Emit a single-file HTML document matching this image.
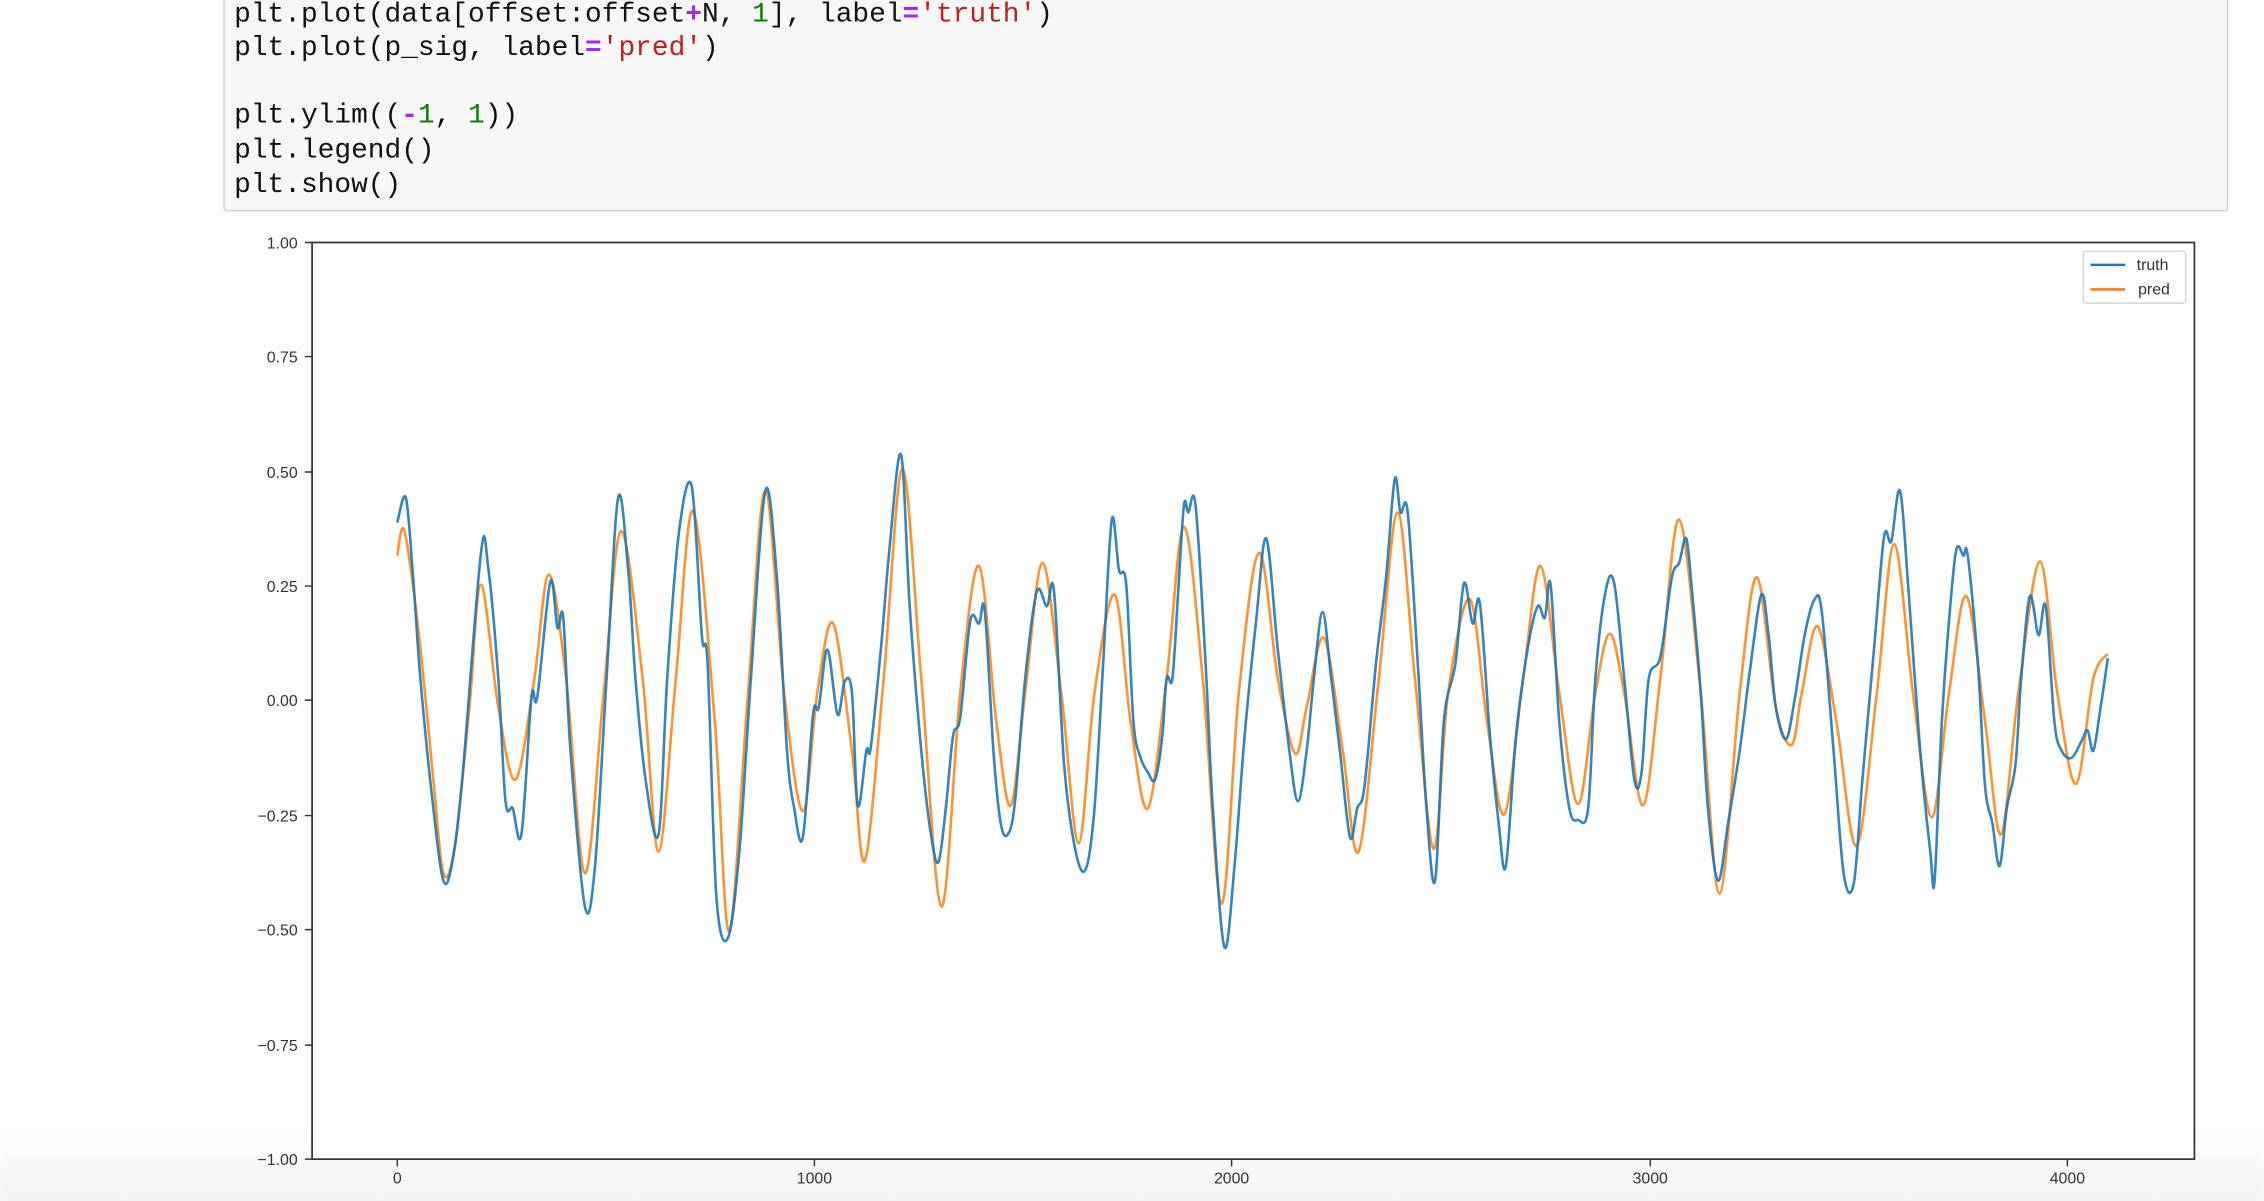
<!DOCTYPE html>
<html><head><meta charset="utf-8"><style>
html,body{margin:0;padding:0;width:2264px;height:1201px;overflow:hidden;background:#fff}
svg{display:block}
</style></head><body>
<svg id="s" width="2264" height="1201" viewBox="0 0 1568 832" xmlns="http://www.w3.org/2000/svg">
<defs><linearGradient id="bg" x1="0" y1="0" x2="0" y2="1"><stop offset="0" stop-color="#fff"/><stop offset="1" stop-color="#f4f4f4"/></linearGradient></defs>
<rect x="0" y="780" width="1568" height="52" fill="url(#bg)"/>
<rect x="155" y="-10" width="1388" height="156" rx="2" fill="#f7f7f7" stroke="#d0d0d0" stroke-width="1"/>
<g font-family="Liberation Mono, monospace" font-size="19.3" fill="#111">
<text x="162" y="15" xml:space="preserve">plt.plot(data[offset:offset<tspan fill="#aa22ff" font-weight="bold">+</tspan>N, <tspan fill="#008000">1</tspan>], label<tspan fill="#aa22ff" font-weight="bold">=</tspan><tspan fill="#ba2121">'truth'</tspan>)</text>
<text x="162" y="38" xml:space="preserve">plt.plot(p_sig, label<tspan fill="#aa22ff" font-weight="bold">=</tspan><tspan fill="#ba2121">'pred'</tspan>)</text>
<text x="162" y="85" xml:space="preserve">plt.ylim((<tspan fill="#aa22ff" font-weight="bold">-</tspan><tspan fill="#008000">1</tspan>, <tspan fill="#008000">1</tspan>))</text>
<text x="162" y="109">plt.legend()</text>
<text x="162" y="133">plt.show()</text>
</g>
<rect x="216" y="168" width="1304" height="635" fill="#fff" stroke="#333" stroke-width="1.2"/>
<g stroke="#333" stroke-width="1">
<path d="M211 168h5M211 247h5M211 327h5M211 406h5M211 485h5M211 565h5M211 644h5M211 724h5M211 803h5M275 803v5M564 803v5M853 803v5M1143 803v5M1432 803v5"/>
</g>
<g font-family="Liberation Sans, sans-serif" font-size="11" fill="#333" text-anchor="end">
<text x="206" y="172">1.00</text><text x="206" y="251">0.75</text><text x="206" y="331">0.50</text><text x="206" y="410">0.25</text><text x="206" y="489">0.00</text><text x="206" y="569">−0.25</text><text x="206" y="648">−0.50</text><text x="206" y="728">−0.75</text><text x="206" y="807">−1.00</text>
</g>
<g font-family="Liberation Sans, sans-serif" font-size="11" fill="#333" text-anchor="middle">
<text x="275" y="820">0</text><text x="564" y="820">1000</text><text x="853" y="820">2000</text><text x="1143" y="820">3000</text><text x="1432" y="820">4000</text>
</g>
<polyline class="c" fill="none" stroke="#ff7f0e" stroke-opacity="0.85" stroke-width="1.8" stroke-linejoin="round" points="275,385 280,368 290,440 300,540 307,605 315,585 325,490 333,405 345,490 357,540 370,470 380,398 392,470 405,605 418,480 430,368 445,470 456,590 468,470 480,354 495,500 505,645 518,480 530,340 543,480 556,562 566,480 577,432 590,520 599,596 612,470 625,325 638,470 652,628 665,480 678,392 690,500 700,558 710,480 722,390 735,480 747,584 758,480 772,412 783,500 795,560 808,470 820,365 833,470 846,626 858,480 872,383 885,470 897,522 905,490 917,442 930,520 941,590 955,470 968,355 980,470 993,588 1003,480 1018,415 1030,500 1042,564 1055,470 1067,392 1080,480 1093,557 1105,480 1115,439 1125,480 1138,558 1150,470 1163,360 1178,480 1191,619 1205,480 1217,400 1230,490 1241,516 1248,480 1259,434 1272,500 1286,586 1300,480 1312,377 1325,480 1338,566 1350,480 1362,413 1375,500 1386,578 1398,480 1413,389 1425,480 1438,543 1450,470 1460,453"/>
<polyline class="c" fill="none" stroke="#1f77b4" stroke-opacity="0.9" stroke-width="1.8" stroke-linejoin="round" points="275,362 281,345 286,400 291,470 300,560 307,610 313,598 320,540 333,383 338,393 345,470 350,555 355,560 361,578 368,483 372,483 381,403 386,435 390,428 395,520 405,628 412,600 420,470 428,345 435,395 440,470 447,540 456,578 462,470 470,370 479,337 486,440 490,460 496,620 504,650 512,590 520,470 530,340 538,400 545,520 550,560 556,580 563,495 567,490 573,450 580,495 585,472 590,480 594,558 600,520 603,518 610,450 616,380 624,315 630,420 638,520 645,580 650,597 655,560 660,510 665,497 672,430 678,432 682,423 688,520 693,570 698,578 703,555 710,470 718,410 725,420 730,410 737,530 745,590 752,602 758,560 764,460 770,360 775,395 780,405 785,500 790,525 795,535 800,540 805,510 808,470 812,470 816,410 820,350 823,355 828,350 835,460 840,560 848,656 855,600 862,510 870,430 877,373 885,450 893,520 899,555 905,520 910,470 916,424 922,470 928,520 935,580 940,560 945,545 953,460 960,400 966,332 970,355 975,355 982,460 988,560 994,610 1000,500 1008,460 1014,404 1020,432 1025,418 1032,510 1038,570 1043,600 1050,510 1058,450 1065,420 1070,428 1074,405 1080,500 1087,560 1093,568 1100,560 1105,470 1112,410 1118,404 1125,470 1132,540 1137,535 1142,470 1150,455 1158,400 1163,390 1168,373 1172,410 1178,480 1183,560 1190,610 1197,570 1205,520 1212,465 1220,412 1225,440 1230,490 1237,512 1243,485 1250,440 1257,415 1262,425 1270,520 1277,605 1284,612 1290,540 1298,450 1305,372 1310,375 1316,340 1322,410 1330,520 1337,590 1340,610 1345,500 1350,430 1355,381 1360,385 1363,385 1370,460 1375,545 1380,570 1385,600 1390,560 1396,530 1400,470 1406,413 1412,440 1417,420 1423,500 1428,520 1435,525 1442,513 1446,506 1450,520 1455,490 1460,456"/>
<rect x="1443" y="174" width="71" height="36" rx="2" fill="#fff" fill-opacity="0.8" stroke="#ccc" stroke-width="0.8"/>
<path d="M1448 183.5h24" stroke="#1f77b4" stroke-width="1.8"/>
<path d="M1448 200.5h24" stroke="#ff7f0e" stroke-width="1.8"/>
<g font-family="Liberation Sans, sans-serif" font-size="11" fill="#333">
<text x="1480" y="187">truth</text><text x="1481" y="204">pred</text>
</g>
</svg>
<script>
document.querySelectorAll('polyline.c').forEach(function(pl){
  var p=pl.getAttribute('points').trim().split(/\s+/).map(function(s){var a=s.split(',');return [+a[0],+a[1]];});
  var d='M'+p[0][0]+' '+p[0][1];
  for(var i=0;i<p.length-1;i++){
    var p0=p[i>0?i-1:i],p1=p[i],p2=p[i+1],p3=p[i+2<p.length?i+2:i+1];
    var c1x=p1[0]+(p2[0]-p0[0])/6,c1y=p1[1]+(p2[1]-p0[1])/6;
    var c2x=p2[0]-(p3[0]-p1[0])/6,c2y=p2[1]-(p3[1]-p1[1])/6;
    d+=' C'+c1x.toFixed(1)+' '+c1y.toFixed(1)+' '+c2x.toFixed(1)+' '+c2y.toFixed(1)+' '+p2[0]+' '+p2[1];
  }
  var path=document.createElementNS('http://www.w3.org/2000/svg','path');
  path.setAttribute('d',d);
  ['fill','stroke','stroke-opacity','stroke-width','stroke-linejoin'].forEach(function(a){path.setAttribute(a,pl.getAttribute(a));});
  pl.parentNode.replaceChild(path,pl);
});
</script>
</body></html>
